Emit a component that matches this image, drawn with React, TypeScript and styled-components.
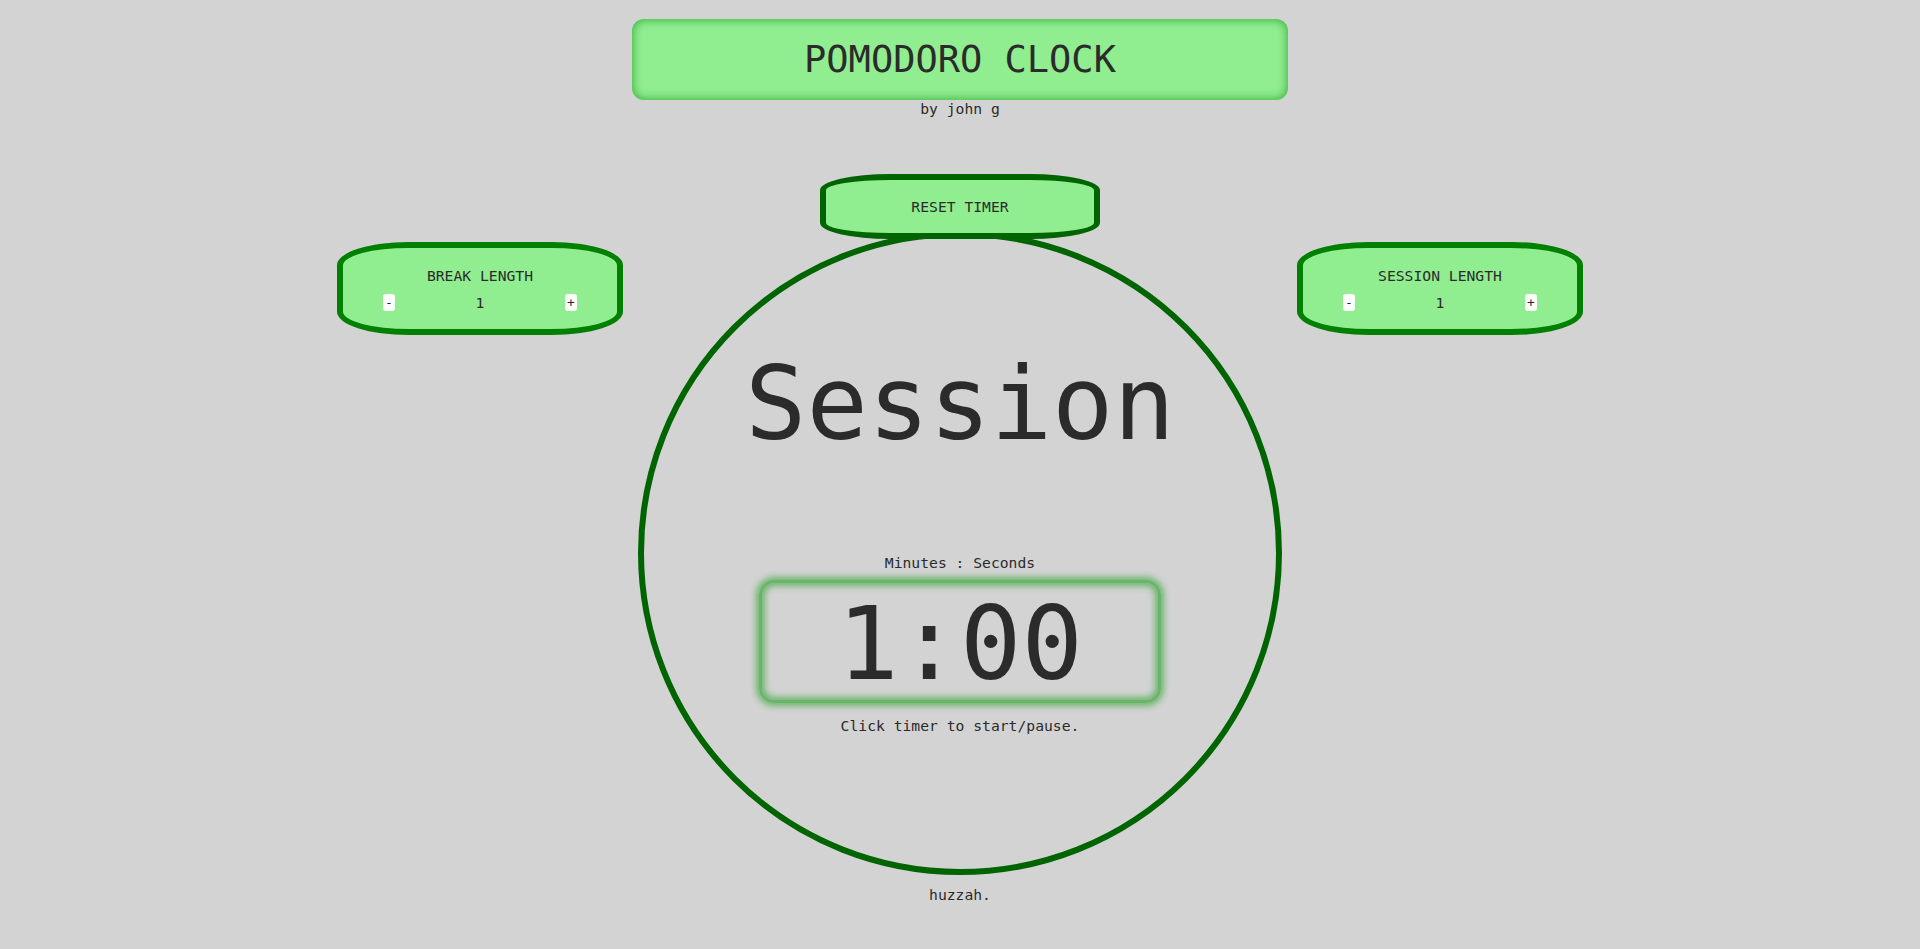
import React from "react";
import styled, { createGlobalStyle } from "styled-components";

const Global = createGlobalStyle`
  html, body {
    margin: 0;
    padding: 0;
    background: #d3d3d3;
  }
  body {
    font-family: "DejaVu Sans Mono", "Liberation Mono", monospace;
    color: #2b2b2b;
  }
`;

const Page = styled.div`
  display: flex;
  flex-direction: column;
  align-items: center;
  padding-top: 19px;
  min-height: 949px;
  box-sizing: border-box;
`;

const TitleBox = styled.header`
  width: 656px;
  height: 81px;
  box-sizing: border-box;
  background: #90ee90;
  border-radius: 12px;
  box-shadow: inset 0 0 10px 1px rgba(40, 160, 40, 0.8);
  display: flex;
  align-items: center;
  justify-content: center;
`;

const Title = styled.h1`
  margin: 0;
  font-weight: normal;
  font-size: 37px;
  letter-spacing: 0;
  line-height: 1;
`;

const SmallText = styled.div<{ $mt?: number }>`
  font-size: 14.7px;
  line-height: 17px;
  margin-top: ${(p) => p.$mt ?? 0}px;
  text-align: center;
  white-space: pre;
`;

const Row = styled.main`
  display: flex;
  align-items: flex-start;
  justify-content: center;
  gap: 15px;
  margin-top: 56.5px;
`;

const Control = styled.section`
  margin-top: 68px;
  width: 286px;
  height: 93px;
  box-sizing: border-box;
  border: 6px solid #008000;
  border-radius: 25%;
  background: #90ee90;
  padding: 19px 40px 0;
  display: flex;
  flex-direction: column;
  gap: 10px;
`;

const ControlRow = styled.div`
  display: flex;
  align-items: center;
  justify-content: space-between;
  height: 17px;
`;

const StepButton = styled.button`
  width: 12px;
  height: 17px;
  padding: 0;
  border: none;
  border-radius: 3px;
  background: #ffffff;
  color: #2b2b2b;
  font-family: "DejaVu Sans Mono", monospace;
  font-size: 13px;
  line-height: 17px;
  display: flex;
  align-items: center;
  justify-content: center;
  cursor: pointer;
`;

const Value = styled.span`
  font-size: 14.7px;
  line-height: 17px;
`;

const Center = styled.div`
  display: flex;
  flex-direction: column;
  align-items: center;
`;

const ResetButton = styled.button`
  position: relative;
  z-index: 1;
  width: 280px;
  height: 65px;
  box-sizing: border-box;
  border: 6px solid #006400;
  border-radius: 25%;
  background: #90ee90;
  color: #2b2b2b;
  font-family: "DejaVu Sans Mono", monospace;
  font-size: 14.7px;
  line-height: 17px;
  padding: 1px 0 0;
  cursor: pointer;
`;

const Circle = styled.div`
  margin-top: -8px;
  width: 644px;
  height: 644px;
  box-sizing: border-box;
  border: 6px solid #006400;
  border-radius: 50%;
  display: flex;
  flex-direction: column;
  align-items: center;
  padding-top: 107px;
`;

const Mode = styled.div`
  font-size: 102px;
  line-height: 120px;
  height: 120px;
`;

const TimerBox = styled.div`
  margin-top: 8.5px;
  width: 402px;
  height: 123px;
  box-sizing: border-box;
  border: 3px solid rgba(92, 176, 92, 0.9);
  border-radius: 15px;
  box-shadow: 0 0 6px 3px rgba(92, 176, 92, 0.85),
    inset 0 0 6px 3px rgba(92, 176, 92, 0.85);
  display: flex;
  justify-content: center;
  padding-top: 2px;
  cursor: pointer;
`;

const Time = styled.div`
  font-size: 102px;
  line-height: 118px;
`;

const Footer = styled(SmallText)`
  margin-top: 11.5px;
`;

type ControlProps = { label: string; value: number };

const LengthControl = ({ label, value }: ControlProps) => (
  <Control>
    <SmallText>{label}</SmallText>
    <ControlRow>
      <StepButton>-</StepButton>
      <Value>{value}</Value>
      <StepButton>+</StepButton>
    </ControlRow>
  </Control>
);

export default function App() {
  return (
    <>
      <Global />
      <Page>
        <TitleBox>
          <Title>POMODORO CLOCK</Title>
        </TitleBox>
        <SmallText $mt={0}>by john g</SmallText>
        <Row>
          <LengthControl label="BREAK LENGTH" value={1} />
          <Center>
            <ResetButton>RESET TIMER</ResetButton>
            <Circle>
              <Mode>Session</Mode>
              <SmallText $mt={90.5}>Minutes : Seconds</SmallText>
              <TimerBox>
                <Time>1:00</Time>
              </TimerBox>
              <SmallText $mt={14.5}>Click timer to start/pause.</SmallText>
            </Circle>
          </Center>
          <LengthControl label="SESSION LENGTH" value={1} />
        </Row>
        <Footer>huzzah.</Footer>
      </Page>
    </>
  );
}
